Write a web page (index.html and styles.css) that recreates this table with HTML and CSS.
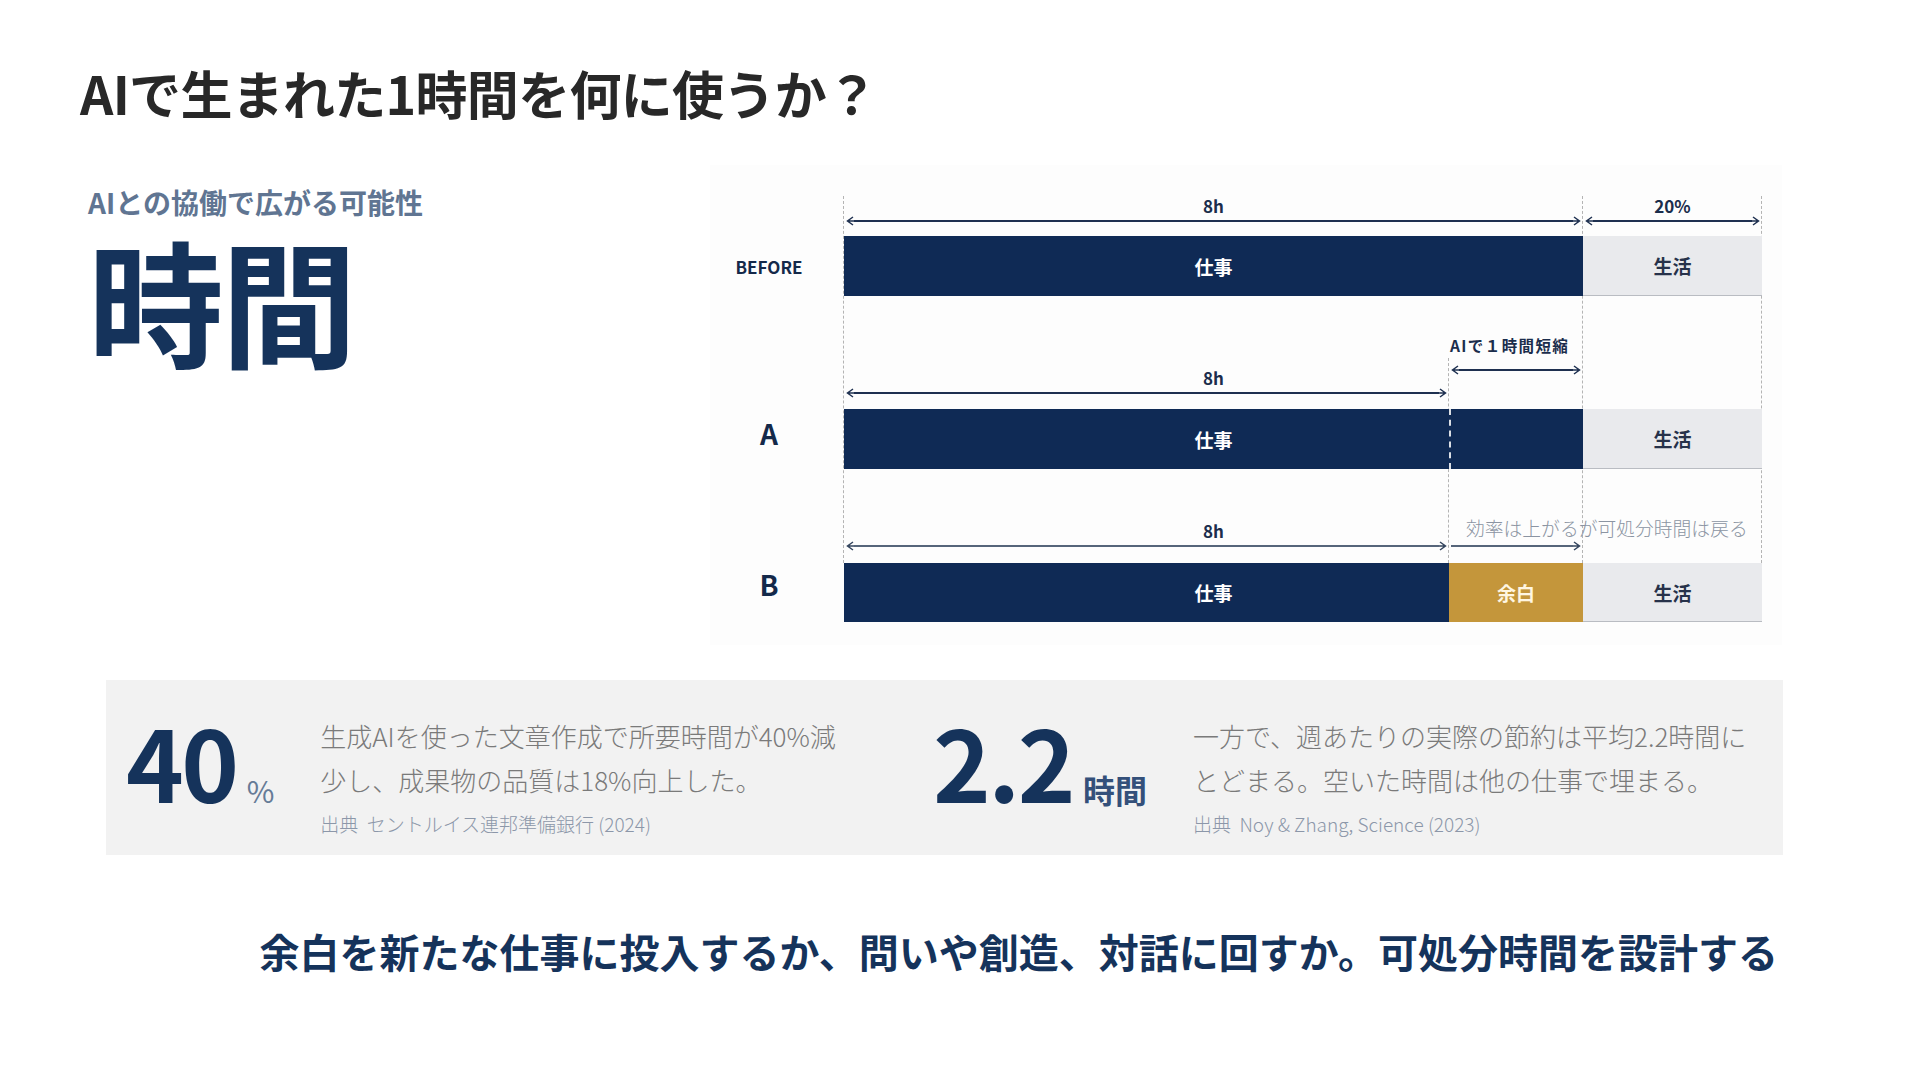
FILE: index.html
```html
<!DOCTYPE html>
<html lang="ja">
<head>
<meta charset="utf-8">
<title>AIで生まれた1時間を何に使うか？</title>
<link rel="stylesheet" href="styles.css">
</head>
<body>
<div class="slide">
  <h1 class="title">AIで生まれた1時間を何に使うか？</h1>

  <div class="main">
    <div class="intro">
      <p class="subtitle">AIとの協働で広がる可能性</p>
      <p class="keyword">時間</p>
    </div>

    <div class="chart">
      <div class="guide g-start"></div>
      <div class="guide g-work"></div>
      <div class="guide g-end"></div>
      <div class="guide g-ai"></div>

      <div class="grid">
        <!-- BEFORE dimensions -->
        <div class="dim c23 r1 pb10">
          <span class="dim-label">8h</span>
          <div class="arrow"><svg class="head" viewBox="0 0 8 10"><path d="M7 1 L1.5 5 L7 9 M1.5 5 H8"/></svg><i class="line"></i><svg class="head" viewBox="0 0 8 10"><path d="M1 1 L6.5 5 L1 9 M6.5 5 H0"/></svg></div>
        </div>
        <div class="dim c4 r1 pb10">
          <span class="dim-label">20%</span>
          <div class="arrow"><svg class="head" viewBox="0 0 8 10"><path d="M7 1 L1.5 5 L7 9 M1.5 5 H8"/></svg><i class="line"></i><svg class="head" viewBox="0 0 8 10"><path d="M1 1 L6.5 5 L1 9 M6.5 5 H0"/></svg></div>
        </div>

        <!-- BEFORE bar -->
        <div class="row-label before c1 r2">BEFORE</div>
        <div class="bar work c23 r2">仕事</div>
        <div class="bar life c4 r2">生活</div>

        <!-- A dimensions -->
        <div class="dim c2 r3 pb11">
          <span class="dim-label offset">8h</span>
          <div class="arrow"><svg class="head" viewBox="0 0 8 10"><path d="M7 1 L1.5 5 L7 9 M1.5 5 H8"/></svg><i class="line"></i><svg class="head" viewBox="0 0 8 10"><path d="M1 1 L6.5 5 L1 9 M6.5 5 H0"/></svg></div>
        </div>
        <div class="dim c3 r3 pb34">
          <span class="ai-label">AIで１時間短縮</span>
          <div class="arrow"><svg class="head" viewBox="0 0 8 10"><path d="M7 1 L1.5 5 L7 9 M1.5 5 H8"/></svg><i class="line"></i><svg class="head" viewBox="0 0 8 10"><path d="M1 1 L6.5 5 L1 9 M6.5 5 H0"/></svg></div>
        </div>

        <!-- A bar -->
        <div class="row-label big a-label c1 r4">A</div>
        <div class="bar work offset c2 r4">仕事</div>
        <div class="bar work saved c3 r4"></div>
        <div class="bar life c4 r4">生活</div>

        <!-- B dimensions -->
        <div class="dim c2 r5 pb12">
          <span class="dim-label offset">8h</span>
          <div class="arrow soft"><svg class="head" viewBox="0 0 8 10"><path d="M7 1 L1.5 5 L7 9 M1.5 5 H8"/></svg><i class="line"></i><svg class="head" viewBox="0 0 8 10"><path d="M1 1 L6.5 5 L1 9 M6.5 5 H0"/></svg></div>
        </div>
        <div class="dim c3 r5 pb12">
          <span class="note">効率は上がるが可処分時間は戻る</span>
          <div class="arrow soft"><i class="line"></i><svg class="head" viewBox="0 0 8 10"><path d="M1 1 L6.5 5 L1 9 M6.5 5 H0"/></svg></div>
        </div>

        <!-- B bar -->
        <div class="row-label big b-label c1 r6">B</div>
        <div class="bar work offset c2 r6">仕事</div>
        <div class="bar slack c3 r6">余白</div>
        <div class="bar life c4 r6">生活</div>
      </div>
    </div>
  </div>

  <div class="stats">
    <div class="stat">
      <div class="figure">
        <span class="num">40</span><span class="unit pct">%</span>
      </div>
      <div class="stat-body">
        <p class="stat-text">生成AIを使った文章作成で所要時間が40%減<br>少し、成果物の品質は18%向上した。</p>
        <p class="source">出典&nbsp;&nbsp;セントルイス連邦準備銀行 (2024)</p>
      </div>
    </div>
    <div class="stat">
      <div class="figure">
        <span class="num">2.2</span><span class="unit hours">時間</span>
      </div>
      <div class="stat-body">
        <p class="stat-text">一方で、週あたりの実際の節約は平均2.2時間に<br>とどまる。空いた時間は他の仕事で埋まる。</p>
        <p class="source">出典&nbsp;&nbsp;Noy &amp; Zhang, Science (2023)</p>
      </div>
    </div>
  </div>

  <p class="closing">余白を新たな仕事に投入するか、問いや創造、対話に回すか。可処分時間を設計する</p>
</div>
</body>
</html>
```

FILE: styles.css
```css
* { box-sizing: border-box; }

html, body {
  margin: 0;
  padding: 0;
  background: #ffffff;
}

body {
  font-family: "Noto Sans CJK JP", "Noto Sans", sans-serif;
  color: #262626;
}

.slide {
  width: 1920px;
  height: 1080px;
  padding: 60px 137px 0 80px;
  overflow: hidden;
}

.title {
  margin: 0;
  font-size: 52px;
  line-height: 65px;
  font-weight: 700;
  color: #282828;
  letter-spacing: -0.7px;
}

/* ---------- main ---------- */
.main {
  display: flex;
  margin-top: 40px;
  height: 480px;
}

.intro {
  width: 630px;
  padding-left: 8px;
  padding-top: 17px;
}

.subtitle {
  margin: 0;
  font-size: 28px;
  line-height: 40px;
  font-weight: 700;
  color: #607592;
}

.keyword {
  margin: 9px 0 0;
  font-size: 136px;
  line-height: 136px;
  font-weight: 700;
  color: #15335b;
  letter-spacing: -3px;
}

/* ---------- chart ---------- */
.chart {
  position: relative;
  width: 1072px;
  height: 480px;
  padding-top: 31px;
  background: #fdfdfd;
}

.guide {
  position: absolute;
  width: 0;
  border-left: 1.5px dashed #b4b4b4;
  top: 31px;
  height: 367px;
}
.g-start { left: 133px; }
.g-work { left: 872px; }
.g-end { left: 1051px; }
.g-ai { left: 738px; top: 193px; height: 205px; }

.grid {
  position: relative;
  display: grid;
  grid-template-columns: 134px 605px 134px 179px;
  grid-template-rows: 40px 60px 113px 60px 94px 59px;
}

.c1 { grid-column: 1; }
.c2 { grid-column: 2; }
.c3 { grid-column: 3; }
.c4 { grid-column: 4; }
.c23 { grid-column: 2 / 4; }
.r1 { grid-row: 1; }
.r2 { grid-row: 2; }
.r3 { grid-row: 3; }
.r4 { grid-row: 4; }
.r5 { grid-row: 5; }
.r6 { grid-row: 6; }

.dim {
  display: flex;
  flex-direction: column;
  justify-content: flex-end;
}
.pb10 { padding-bottom: 10px; }
.pb11 { padding-bottom: 11px; }
.pb12 { padding-bottom: 12px; }
.pb34 { padding-bottom: 34px; }

.dim-label {
  display: block;
  text-align: center;
  font-size: 17px;
  line-height: 20px;
  font-weight: 700;
  color: #1b2d4c;
}
.dim-label.offset { padding-left: 134px; }

.ai-label {
  display: block;
  padding-left: 1px;
  margin-bottom: 10px;
  font-size: 15.5px;
  line-height: 20px;
  font-weight: 700;
  color: #1b2d4c;
  letter-spacing: 1.4px;
  white-space: nowrap;
}

.note {
  display: block;
  padding-left: 17px;
  margin-bottom: 2px;
  font-size: 18.8px;
  line-height: 22px;
  font-weight: 300;
  color: #8b94a2;
  white-space: nowrap;
}

.arrow {
  display: flex;
  align-items: center;
  height: 10px;
  padding: 0 2px;
}
.arrow .line {
  flex: 1;
  height: 1.5px;
  background: #1e3050;
}
.arrow .head {
  width: 8px;
  height: 10px;
  flex: none;
}
.arrow .head path {
  fill: none;
  stroke: #1e3050;
  stroke-width: 1.5;
}
.arrow.soft .line { background: #56657a; }
.arrow.soft .head path { stroke: #34455e; }

.row-label {
  display: flex;
  align-items: center;
  justify-content: center;
  padding-right: 16px;
  color: #14294a;
  font-weight: 700;
}
.row-label.before { font-size: 17px; }
.row-label.big { font-size: 28px; }
.row-label.a-label { padding-bottom: 12px; }
.row-label.b-label { padding-bottom: 18px; }

.bar {
  display: flex;
  align-items: center;
  justify-content: center;
  font-size: 19px;
  font-weight: 700;
}
.bar.work {
  background: #0f2a55;
  color: #ffffff;
}
.bar.offset { padding-left: 134px; }
.bar.saved { border-left: 2px dashed rgba(255, 255, 255, 0.85); }
.bar.slack {
  background: #c4963b;
  color: #fff6e2;
}
.bar.life {
  background: #e9eaed;
  color: #27324a;
  border-bottom: 1.5px solid #b9bcc2;
}

/* ---------- stats ---------- */
.stats {
  display: grid;
  grid-template-columns: 807px 1fr;
  align-items: center;
  margin-top: 35px;
  margin-left: 26px;
  width: 1677px;
  height: 175px;
  padding-left: 20px;
  background: #f2f2f2;
}

.stat {
  display: flex;
  align-items: center;
  gap: 46px;
}

.figure {
  display: flex;
  align-items: baseline;
  gap: 10px;
  margin-top: -12px;
}

.num {
  font-size: 98px;
  line-height: 1;
  font-weight: 700;
  color: #15335b;
  letter-spacing: -2.5px;
}

.unit.pct {
  font-size: 30px;
  font-weight: 400;
  color: #667b97;
}

.unit.hours {
  font-size: 32px;
  font-weight: 700;
  color: #34507a;
}

.stat-body {
  padding-top: 18px;
}

.stat-text {
  margin: 0;
  font-size: 26px;
  line-height: 44px;
  font-weight: 300;
  color: #7a7a7a;
  white-space: nowrap;
}

.source {
  margin: 7px 0 0;
  font-size: 19px;
  line-height: 30px;
  font-weight: 300;
  color: #8c97a9;
  white-space: nowrap;
}

/* ---------- closing ---------- */
.closing {
  margin: 68px 0 0;
  padding-right: 5px;
  text-align: right;
  font-size: 40px;
  line-height: 56px;
  font-weight: 700;
  color: #15335b;
  white-space: nowrap;
}
```
